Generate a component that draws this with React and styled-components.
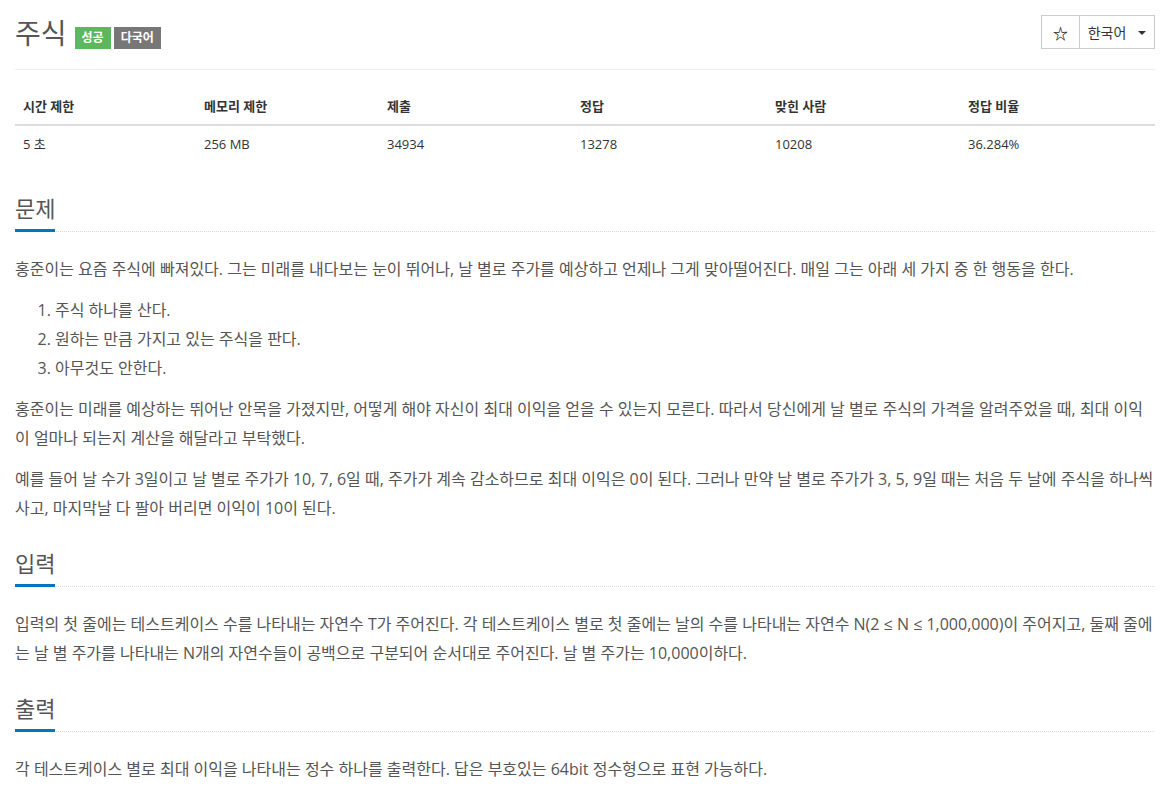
import React from "react";
import styled, { createGlobalStyle } from "styled-components";

const GlobalStyle = createGlobalStyle`
  html, body {
    margin: 0;
    padding: 0;
    background: #fff;
  }
  body {
    font-family: "Open Sans", "Noto Sans CJK KR", sans-serif;
    color: #555;
  }
  * {
    box-sizing: border-box;
  }
`;

const infoHead = ["시간 제한", "메모리 제한", "제출", "정답", "맞힌 사람", "정답 비율"];
const infoBody = ["5 초", "256 MB", "34934", "13278", "10208", "36.284%"];
const colWidths = [181, 183, 193, 195, 193, 195];

export default function App() {
  return (
    <Page>
      <GlobalStyle />
      <PageHeader>
        <TitleRow>
          <Title>주식</Title>
          <Label color="#5cb85c">성공</Label>
          <Label color="#777">다국어</Label>
        </TitleRow>
        <BtnGroup>
          <Btn>
            <Star>☆</Star>
          </Btn>
          <Btn wide>
            한국어
            <Caret />
          </Btn>
        </BtnGroup>
      </PageHeader>

      <InfoTable>
        <thead>
          <tr>
            {infoHead.map((h, i) => (
              <Th key={h} style={{ width: colWidths[i] }}>
                {h}
              </Th>
            ))}
          </tr>
        </thead>
        <tbody>
          <tr>
            {infoBody.map((v) => (
              <Td key={v}>{v}</Td>
            ))}
          </tr>
        </tbody>
      </InfoTable>

      <Section first>
        <Headline>
          <HeadText>문제</HeadText>
        </Headline>
        <Text>
          홍준이는 요즘 주식에 빠져있다. 그는 미래를 내다보는 눈이 뛰어나, 날 별로 주가를 예상하고 언제나 그게 맞아떨어진다. 매일 그는 아래 세 가지 중 한 행동을 한다.
        </Text>
        <List>
          <li>주식 하나를 산다.</li>
          <li>원하는 만큼 가지고 있는 주식을 판다.</li>
          <li>아무것도 안한다.</li>
        </List>
        <Text>
          홍준이는 미래를 예상하는 뛰어난 안목을 가졌지만, 어떻게 해야 자신이 최대 이익을 얻을 수 있는지 모른다. 따라서 당신에게 날 별로 주식의 가격을 알려주었을 때, 최대 이익이 얼마나 되는지 계산을 해달라고 부탁했다.
        </Text>
        <Text>
          예를 들어 날 수가 3일이고 날 별로 주가가 10, 7, 6일 때, 주가가 계속 감소하므로 최대 이익은 0이 된다. 그러나 만약 날 별로 주가가 3, 5, 9일 때는 처음 두 날에 주식을 하나씩 사고, 마지막날 다 팔아 버리면 이익이 10이 된다.
        </Text>
      </Section>

      <Section>
        <Headline>
          <HeadText>입력</HeadText>
        </Headline>
        <Text>
          입력의 첫 줄에는 테스트케이스 수를 나타내는 자연수 T가 주어진다. 각 테스트케이스 별로 첫 줄에는 날의 수를 나타내는 자연수 N(2 ≤ N ≤ 1,000,000)이 주어지고, 둘째 줄에는 날 별 주가를 나타내는 N개의 자연수들이 공백으로 구분되어 순서대로 주어진다. 날 별 주가는 10,000이하다.
        </Text>
      </Section>

      <Section>
        <Headline>
          <HeadText>출력</HeadText>
        </Headline>
        <Text>
          각 테스트케이스 별로 최대 이익을 나타내는 정수 하나를 출력한다. 답은 부호있는 64bit 정수형으로 표현 가능하다.
        </Text>
      </Section>
    </Page>
  );
}

const Page = styled.div`
  width: 1168px;
  padding: 0 13px 0 15px;
`;

const PageHeader = styled.div`
  display: flex;
  justify-content: space-between;
  align-items: flex-start;
  padding-top: 15px;
  padding-bottom: 18px;
  border-bottom: 1px solid #eee;
`;

const TitleRow = styled.div`
  display: flex;
  align-items: center;
  gap: 3px;
`;

const Title = styled.h1`
  margin: 0 5px 0 0;
  font-size: 28px;
  font-weight: 400;
  line-height: 36px;
  color: #555;
`;

const Label = styled.span`
  display: inline-block;
  margin-top: 10px;
  padding: 0 7px;
  height: 22px;
  line-height: 22px;
  font-size: 12px;
  font-weight: 700;
  color: #fff;
  background: ${(p) => p.color};
`;

const BtnGroup = styled.div`
  display: flex;
  height: 34px;
`;

const Btn = styled.div`
  display: flex;
  align-items: center;
  justify-content: center;
  gap: 12px;
  width: ${(p) => (p.wide ? "76px" : "39px")};
  height: 34px;
  border: 1px solid #ccc;
  margin-left: ${(p) => (p.wide ? "-1px" : "0")};
  font-size: 14px;
  color: #333;
  background: #fff;
`;

const Star = styled.span`
  font-family: "Noto Sans CJK KR", sans-serif;
  font-size: 15px;
  font-weight: 700;
  color: #222;
`;

const Caret = styled.span`
  width: 0;
  height: 0;
  border-left: 4px solid transparent;
  border-right: 4px solid transparent;
  border-top: 4px solid #333;
  margin-top: 2px;
`;

const InfoTable = styled.table`
  width: 100%;
  margin-top: 18px;
  border-collapse: collapse;
  table-layout: fixed;
  font-size: 13px;
`;

const Th = styled.th`
  text-align: left;
  padding: 8px 8px;
  line-height: 20px;
  font-weight: 700;
  color: #333;
  border-bottom: 2px solid #ddd;
`;

const Td = styled.td`
  padding: 8px 8px;
  line-height: 20px;
  color: #333;
`;

const Section = styled.section`
  margin-top: ${(p) => (p.first ? "31px" : "25px")};
`;

const Headline = styled.h2`
  display: flex;
  margin: 0 0 23px;
  font-size: 22px;
  font-weight: 400;
  line-height: 30px;
  color: #555;
  border-bottom: 1px dotted #d8dde3;
`;

const HeadText = styled.span`
  padding-bottom: 6px;
  margin-bottom: -1px;
  border-bottom: 3px solid #0076c0;
`;

const Text = styled.p`
  margin: 0 0 12px;
  font-size: 16px;
  line-height: 29px;
  word-break: break-all;
`;

const List = styled.ol`
  margin: 0 0 12px;
  padding-left: 40px;
  font-size: 16px;
  line-height: 29px;
`;
